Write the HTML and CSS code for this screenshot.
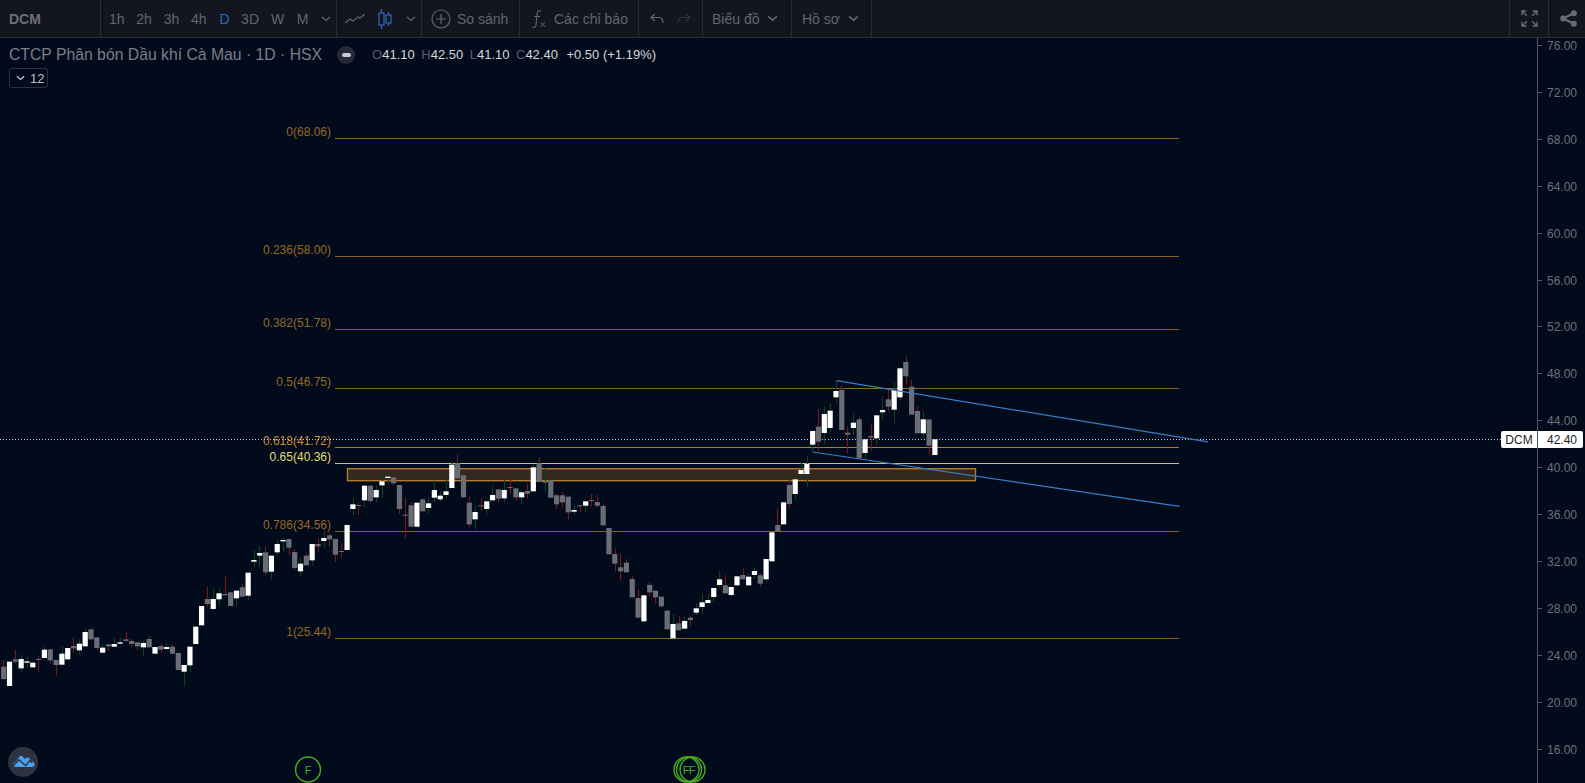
FILE: index.html
```html
<!DOCTYPE html>
<html lang="vi">
<head>
<meta charset="utf-8">
<title>DCM</title>
<link rel="stylesheet" href="styles.css">
</head>
<body>
<div class="app">
  <header class="toolbar">
    <div class="seg seg-symbol"><b>DCM</b></div>
    <div class="seg seg-times">
      <span class="tf t1">1h</span><span class="tf t2">2h</span><span class="tf t3">3h</span><span class="tf t4">4h</span><span class="tf t5 active">D</span><span class="tf t6">3D</span><span class="tf t7">W</span><span class="tf t8">M</span>
      <svg class="chev" viewBox="0 0 10 6"><path d="M1 1l4 3.5L9 1"/></svg>
    </div>
    <div class="seg seg-type">
      <svg class="ic-line" viewBox="0 0 20 10"><path d="M0 9l5-4 3 2 5-4 2 1 5-4"/></svg>
      <svg class="ic-candle" viewBox="0 0 14 20"><path d="M3.500 0v4M3.500 16v4M10.500 3v3M10.500 14v3"/><rect x="1" y="4" width="5" height="12"/><rect x="8" y="6" width="5" height="8"/></svg>
      <svg class="chev" viewBox="0 0 10 6"><path d="M1 1l4 3.5L9 1"/></svg>
    </div>
    <div class="seg seg-compare">
      <svg class="ic-plus" viewBox="0 0 20 20"><circle cx="10" cy="10" r="9"/><path d="M10 5v10M5 10h10"/></svg>
      <span>So sánh</span>
    </div>
    <div class="seg seg-ind">
      <svg class="ic-fx" viewBox="0 0 14 20"><path d="M9 2.5C7 .5 5.500 2 5.200 4.500L4 16c-.3 2.500-2 3-3.500 2M2 7.500h6"/><path class="thin" d="M8.500 13l4.500 5M13 13l-4.500 5"/></svg>
      <span>Các chỉ báo</span>
    </div>
    <div class="seg seg-undo">
      <svg class="ic-undo" viewBox="0 0 14 12"><path d="M5 1L1 4.500 5 8M1 4.500h8c2.500 0 4 2 4 5.500"/></svg>
      <svg class="ic-undo dim" viewBox="0 0 14 12"><path d="M9 1l4 3.500L9 8M13 4.500H5c-2.500 0-4 2-4 5.500"/></svg>
    </div>
    <div class="seg seg-chart"><span>Biểu đồ</span><svg class="chev lg" viewBox="0 0 10 6"><path d="M1 1l4 3.500L9 1"/></svg></div>
    <div class="seg seg-profile"><span>Hồ sơ</span><svg class="chev lg" viewBox="0 0 10 6"><path d="M1 1l4 3.500L9 1"/></svg></div>
    <div class="spacer"></div>
    <div class="seg seg-full">
      <svg class="ic-full" viewBox="0 0 16 16"><path d="M1 5V1h4M1 1l4.500 4.500M11 1h4v4M15 1l-4.500 4.500M1 11v4h4M1 15l4.500-4.500M15 11v4h-4M15 15l-4.500-4.500"/></svg>
    </div>
    <div class="seg seg-share">
      <svg class="ic-share" viewBox="0 0 16 16"><path class="bar" d="M13 3L3 8l10 5"/><circle cx="13" cy="3" r="2.800"/><circle cx="3" cy="8" r="2.800"/><circle cx="13" cy="13" r="2.800"/></svg>
    </div>
  </header>

  <main class="stage">
    <section class="pane">
      <svg class="chart" viewBox="0 38 1537 745">
        <g class="fib">
          <path class="fib-line" d="M335 138.500H1179M335 256.500H1179M335 329.500H1179M335 388.500H1179M335 531.500H1179M335 638.500H1179"/>
          <path class="fib-618" d="M335 447.500H1179"/>
          <path class="fib-65" d="M335 463.500H1179"/>
          <rect class="zone" x="347.500" y="468.700" width="628" height="12"/>
          <text class="fib-label" x="331" y="136">0(68.06)</text>
          <text class="fib-label" x="331" y="254">0.236(58.00)</text>
          <text class="fib-label" x="331" y="327">0.382(51.78)</text>
          <text class="fib-label" x="331" y="386">0.5(46.75)</text>
          <text class="fib-label l618" x="331" y="445">0.618(41.72)</text>
          <text class="fib-label l65" x="331" y="461">0.65(40.36)</text>
          <text class="fib-label" x="331" y="529">0.786(34.56)</text>
          <text class="fib-label" x="331" y="636">1(25.44)</text>
        </g>
        <path class="crosshair" d="M0 439.500H1501"/>
        <g id="candles"></g>
        <path class="trend" d="M836.700 380.700L1208 441.800M812.700 452L1179.600 506.300"/>
        <g class="marks">
          <circle cx="308" cy="769.500" r="12.500"/>
          <text x="308" y="774">F</text>
          <circle cx="686.500" cy="769.500" r="12.500"/>
          <circle cx="689" cy="769.500" r="12.500"/>
          <circle cx="692.500" cy="769.500" r="12.500"/>
          <text x="686" y="774">F</text>
          <text x="692" y="774">F</text>
        </g>
      </svg>

      <div class="legend">
        <div class="legend-row">
          <span class="title">CTCP Phân bón Dầu khí Cà Mau · 1D · HSX</span>
          <span class="collapse"><i></i></span>
          <span class="ohlc">
            <span><em>O</em>41.10</span><span><em>H</em>42.50</span><span><em>L</em>41.10</span><span><em>C</em>42.40</span><span class="chg">+0.50 (+1.19%)</span>
          </span>
        </div>
        <div class="study">
          <svg class="chev light" viewBox="0 0 10 6"><path d="M1 1l4 3.500L9 1"/></svg><span>12</span>
        </div>
      </div>

      <svg class="logo" viewBox="0 0 32 32">
        <circle class="logo-bg" cx="16" cy="16" r="15"/>
        <path class="logo-cloud" d="M9 21C6 21 5.500 17 8.500 16L13 10Q14 9.300 15 10L17.500 13 20 11.500Q21.500 11 22.500 12.500L24 15C28 15 29 21 25 21Z"/>
        <path class="logo-line" d="M6.300 19.700L12 13.700 18.700 19.700 23 14.300 25.300 17"/>
      </svg>
    </section>

    <aside class="axis">
      <div class="tick">76.00</div><div class="tick">72.00</div><div class="tick">68.00</div><div class="tick">64.00</div>
      <div class="tick">60.00</div><div class="tick">56.00</div><div class="tick">52.00</div><div class="tick">48.00</div>
      <div class="tick">44.00</div><div class="tick">40.00</div><div class="tick">36.00</div><div class="tick">32.00</div>
      <div class="tick">28.00</div><div class="tick">24.00</div><div class="tick">20.00</div><div class="tick">16.00</div>
    </aside>
    <div class="tag-name">DCM</div>
    <div class="tag-price">42.40</div>
  </main>
</div>
<script src="chart.js"></script>
</body>
</html>
```

FILE: styles.css
```css
* { box-sizing: border-box; }
html, body { margin: 0; height: 100%; overflow: hidden; background: #020b1c; }
body { font-family: "Liberation Sans", Arial, sans-serif; }
.app { display: flex; flex-direction: column; height: 783px; width: 1585px; }

/* toolbar */
.toolbar { display: flex; height: 38px; flex: none; background: #14161f; border-bottom: 1px solid #2a2d38; color: #62656e; font-size: 14px; }
.seg { display: flex; align-items: center; height: 37px; border-right: 1px solid #2a2d38; flex: none; }
.seg svg { fill: none; stroke: currentColor; }
.spacer { flex: 1; }
.seg-symbol { width: 101px; padding-left: 9px; color: #6e7078; }
.seg-times { width: 236px; position: relative; }
.tf { text-align: center; }
.t1, .t2, .t3, .t4 { width: 27.400px; }
.t1 { margin-left: 2px; }
.t5 { width: 24px; }
.t6 { width: 27px; }
.t7 { width: 28px; }
.t8 { width: 22px; }
.active { color: #2b69bd; }
.chev { width: 10px; height: 6px; stroke-width: 1.300; margin-left: 7px; }
.seg .chev.lg { width: 11px; height: 7px; stroke-width: 1.500; margin-left: 8px; }
.seg-type { width: 85px; padding-left: 8px; }
.ic-line { width: 20px; height: 10px; stroke-width: 1.100; }
.seg .ic-candle { width: 14px; height: 20px; margin-left: 13px; color: #2b69bd; stroke-width: 1.200; }
.seg-type .chev { margin-left: 14px; }
.seg-compare { width: 98px; padding-left: 9px; gap: 6px; }
.ic-plus { width: 20px; height: 20px; stroke-width: 1.200; }
.seg-ind { width: 119px; padding-left: 12px; gap: 8px; }
.ic-fx { width: 14px; height: 20px; stroke-width: 1.100; }
.seg .thin { stroke-width: 1; }
.seg-undo { width: 64px; padding-left: 11px; gap: 13px; }
.ic-undo { width: 14px; height: 12px; stroke-width: 1.200; }
.seg .dim { color: #33353f; }
.seg-chart { width: 89px; padding-left: 9px; }
.seg-profile { width: 80px; padding-left: 10px; }
.seg-full { border-left: 1px solid #2a2d38; width: 40px; justify-content: center; }
.ic-full { width: 17px; height: 17px; stroke-width: 1.300; color: #6a6c74; }
.seg-share { width: 35.700px; border-right: 0; padding-left: 11px; }
.ic-share { width: 17px; height: 17px; }
.seg .ic-share circle { stroke: none; fill: #6a6c74; }
.seg .ic-share .bar { stroke: #6a6c74; stroke-width: 2.200; fill: none; }

/* chart area */
.stage { position: relative; display: flex; flex: 1; min-height: 0; overflow: hidden; }
.pane { position: relative; width: 1537px; flex: none; }
.chart { display: block; width: 1537px; height: 745px; }
.fib-line { stroke: #8a6226; stroke-width: 1.200; fill: none; }
.fib-618 { stroke: #a8802f; stroke-width: 1.200; fill: none; }
.fib-65 { stroke: #c8c46c; stroke-width: 1.200; fill: none; }
.zone { fill: #33291f; stroke: #b57b2c; stroke-width: 1.400; }
.fib-label { font-size: 12px; text-anchor: end; fill: #966920; }
.l618 { fill: #c98a36; }
.l65 { fill: #e3dc6b; }
.crosshair { stroke: #c4c8ce; stroke-dasharray: 1 2; fill: none; }
.trend { stroke: #3b7cc0; stroke-width: 1.200; fill: none; }
.marks circle { fill: none; stroke: #47ad20; stroke-width: 1.400; }
.marks text { font-size: 11px; fill: #47ad20; text-anchor: middle; }
.wick-up { fill: #12401c; }
.wick-down { fill: #701a1c; }
.body-up { fill: #ffffff; }
.body-down { fill: #6a6d75; }

.legend { position: absolute; left: 9px; top: 6px; }
.legend-row { display: flex; align-items: center; height: 21px; }
.title { font-size: 15.750px; color: #7b7e85; }
.collapse { display: flex; align-items: center; justify-content: center; width: 18px; height: 18px; border-radius: 50%; background: #252a36; margin-left: 15px; }
.collapse i { display: block; width: 9px; height: 4px; border-radius: 2px; background: #c9cad0; }
.ohlc { display: flex; font-size: 13px; color: #d6d7da; margin-left: 17px; gap: 6.500px; }
.ohlc em { font-style: normal; color: #5c5f68; }
.chg { margin-left: 2px; }
.study { display: flex; align-items: center; width: 39px; height: 20px; margin-top: 3px; padding-left: 6px; border: 1px solid #2c313c; border-radius: 3px; font-size: 13px; color: #bfc1c5; }
.study .chev { fill: none; stroke: #c4c6ca; margin: 0 5px 0 0; width: 9px; height: 6px; stroke-width: 1.400; }

.logo { position: absolute; left: 7px; top: 708px; width: 32px; height: 32px; }
.logo-bg { fill: #2f3340; }
.logo-cloud { fill: #4aa3ee; }
.logo-line { fill: none; stroke: #2f3340; stroke-width: 1.400; }

/* price axis */
.axis { flex: 1; padding-top: 1px; border-left: 1px solid #55585f; display: flex; flex-direction: column; gap: 32.920px; color: #6d7077; font-size: 12px; }
.tick { position: relative; height: 14px; line-height: 14px; padding-left: 9px; }
.tick::before { content: ""; position: absolute; left: 0; top: 6px; width: 4px; height: 1px; background: #55585f; }

.tag-name, .tag-price { position: absolute; top: 393px; height: 17px; line-height: 18px; background: #fff; color: #1a1c22; font-size: 12px; text-align: center; }
.tag-name { left: 1501px; width: 36px; border-radius: 2px 0 0 2px; }
.tag-price { left: 1538px; width: 45px; padding-left: 3px; border-radius: 0 2px 2px 0; }
```

FILE: chart.js
```js
// Candle data read per section: [kind, bodyTop, bodyBottom, wickTop, wickBottom]
// kind: w = up (white), g = down (grey), h = grey body with an up-coloured wick
// 0 for a wick end means no wick past the body. Values are in thirds of a pixel from base.
var sections = [
  { base: 520, start: 0, rows: [
    ['g',440,477,420,480],['w',425,498,0,0],['g',418,425,390,430],['w',417,445,405,458],['w',424,428,410,443],
    ['w',428,442,0,0],['g',417,419,408,456],['w',389,414,380,415],['g',388,421,0,431],['g',420,435,0,468],
    ['w',401,434,378,0],['w',384,418,0,0],['g',378,385,352,398],['w',371,391,358,404],['w',336,379,325,380],
    ['g',328,358,325,362],['g',352,384,0,390],['w',383,398,370,400],['g',373,379,0,393],['w',372,380,355,382],
    ['w',367,371,352,372],['g',358,363,337,365],['g',363,372,357,380],['g',367,379,0,388],['w',369,382,362,408],
    ['g',357,382,348,0],['w',381,401,0,0],['g',378,389,370,400],['w',381,387,370,390],['g',380,401,374,0],
    ['g',399,450,0,0],['w',435,455,0,500],['w',380,436,0,455],['w',320,372,0,0],['w',258,316,0,0],
    ['g',237,252,200,262],['w',237,267,205,270],['w',220,238,205,255],['g',222,226,170,0],['g',217,258,0,0],
    ['w',212,235,0,260],['g',202,230,190,0],['w',158,227,0,240],['w',120,125,90,143],['w',99,107,78,140],
    ['g',97,157,80,165],['w',107,155,0,178],['w',72,97,58,107],['w',60,64,52,95],['g',57,83,0,105],
    ['g',96,144,88,150],['w',131,154,113,170],['g',107,136,100,0],['w',72,121,0,136],['g',72,79,55,97],
    ['w',54,63,30,85],['g',46,58,40,80],['g',57,104,0,125],['g',93,95,72,115],['w',15,90,0,0]
  ]},
  { base: 420, start: 60, rows: [
    ['w',253,267,232,285],['g',255,258,248,285],['w',197,241,0,263],['g',197,243,0,248],['w',210,232,197,248],
    ['w',184,196,150,232],['w',170,174,150,193],['g',172,190,162,197],['g',195,267,0,282],['g',284,287,232,355],
    ['g',256,320,246,0],['w',248,320,0,326],['g',238,274,235,0],['w',250,264,232,283],['w',210,233,182,246],
    ['w',227,238,214,245],['w',214,225,172,233],['w',134,204,124,0],['g',130,175,105,0],['g',166,232,160,0],
    ['g',248,313,230,322],['w',276,298,258,327],['g',256,258,235,272],['w',244,267,0,285],['w',225,241,196,0],
    ['g',208,236,0,248],['w',210,235,180,248],['g',201,204,172,221],['g',205,232,0,242],['w',217,232,210,254],
    ['g',213,221,190,236],['w',142,214,135,0],['g',130,186,112,0],['h',183,188,145,218],['g',180,233,165,0],
    ['g',226,253,220,268],['g',226,247,215,262],['g',230,277,0,298],['w',270,275,255,285],['g',256,259,0,278],
    ['w',244,257,0,277],['g',240,242,222,260],['g',246,257,225,263],['g',258,316,252,0]
  ]},
  { base: 490, start: 104, rows: [
    ['g',114,193,0,0],['g',192,221,176,246],['g',232,244,190,272],['g',218,247,207,0],['g',267,322,258,0],
    ['g',324,383,298,0],['w',316,394,0,0],['g',285,307,276,320],['g',302,322,0,340],['g',320,349,0,356],
    ['g',362,418,360,0],['w',402,445,372,452],['g',400,421,378,0],['w',393,416,380,0],['g',383,390,378,407],
    ['w',355,368,340,375],['w',337,351,310,373],['w',330,339,312,340],['w',294,321,0,338],['w',268,285,243,292],
    ['g',286,310,255,0],['w',291,315,0,320],['w',259,286,0,0],['g',255,268,235,0],['w',260,286,250,0],
    ['w',243,255,234,266],['g',256,281,250,290],['w',207,268,0,275],['w',127,214,0,0],['g',105,124,55,0],
    ['w',37,103,0,0]
  ]},
  { base: 350, start: 135, rows: [
    ['g',405,462,390,474],['w',388,432,0,450],['w',360,372,337,385],['w',342,372,318,410],['w',243,284,0,308],
    ['g',230,275,177,303],['w',192,249,170,284],['w',182,234,160,246],['w',123,142,90,160],['g',120,240,106,0],
    ['g',248,254,230,310],['w',218,234,193,255],['g',208,325,200,0],['w',268,309,0,330],['g',258,262,223,302],
    ['w',196,265,0,288],['w',180,187,140,208],['g',148,170,118,185],['w',120,179,98,220],['w',55,142,0,152],
    ['g',36,79,18,103],['g',110,194,90,0],['g',183,250,168,0],['w',208,250,183,268],['g',208,287,0,315],
    ['w',268,315,0,0]
  ]}
];

var NS = 'http://www.w3.org/2000/svg';
var layer = document.getElementById('candles');

function box(x, y, w, h, cls) {
  var r = document.createElementNS(NS, 'rect');
  r.setAttribute('x', x);
  r.setAttribute('y', y);
  r.setAttribute('width', w);
  r.setAttribute('height', h);
  r.setAttribute('class', cls);
  layer.appendChild(r);
}

sections.forEach(function (s) {
  s.rows.forEach(function (c, n) {
    var center = 3.4 + 5.82 * (s.start + n);
    var top = s.base + c[1] / 3;
    var bottom = Math.max(top + 1, s.base + c[2] / 3);
    var wt = c[3] ? s.base + c[3] / 3 : top;
    var wb = c[4] ? s.base + c[4] / 3 : bottom;
    if (wb > wt) box(Math.round(center) - 0.1, wt, 1.2, wb - wt, c[0] === 'g' ? 'wick-down' : 'wick-up');
    box(center - 2.3, top, 5.2, bottom - top, c[0] === 'w' ? 'body-up' : 'body-down');
  });
});
```
